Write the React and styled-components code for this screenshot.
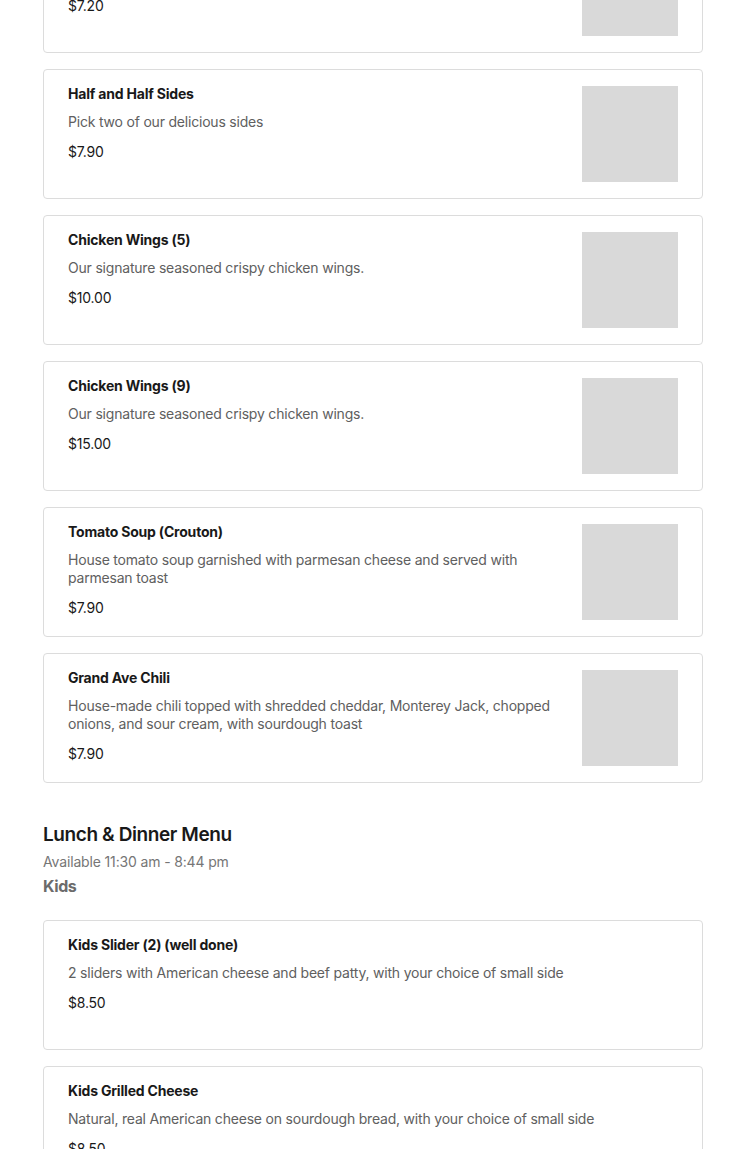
import React from 'react'
import styled, { createGlobalStyle } from 'styled-components'

const GlobalStyle = createGlobalStyle`
    body {
        margin: 0;
        background: #ffffff;
        font-family: "Inter", "Liberation Sans", sans-serif;
        color: #191919;
    }
`;

const Page = styled.div`
    width: 660px;
    margin: -77px auto 0;
    padding-left: 1px;
`;
const List = styled.div`
    display: flex;
    flex-direction: column;
    gap: 16px;
`;
const Card = styled.div`
    box-sizing: border-box;
    min-height: 130px;
    border: 1px solid #dcdcdc;
    border-radius: 4px;
    padding: 16px 24px 16px 24px;
    display: flex;
    justify-content: space-between;
    gap: 24px;
`;
const Info = styled.div`
    display: flex;
    flex-direction: column;
    flex: 1;
`;
const Name = styled.div`
    font-size: 14px;
    line-height: 16px;
    font-weight: 700;
    letter-spacing: -0.2px;
    color: #191919;
`;
const Desc = styled.div`
    font-size: 14px;
    line-height: 18px;
    letter-spacing: -0.2px;
    color: #606060;
    margin-top: 11px;
`;
const Price = styled.div`
    font-size: 14px;
    line-height: 18px;
    letter-spacing: -0.2px;
    color: #191919;
    margin-top: 12px;
`;
const Thumb = styled.div`
    width: 96px;
    height: 96px;
    flex-shrink: 0;
    background: #d9d9d9;
`;
const Section = styled.div`
    margin-top: 40px;
    margin-bottom: 24px;
`;
const Heading = styled.h2`
    margin: 0;
    font-size: 19px;
    line-height: 24px;
    font-weight: 600;
    letter-spacing: -0.4px;
    color: #191919;
`;
const Hours = styled.div`
    margin-top: 6px;
    font-size: 14px;
    line-height: 18px;
    letter-spacing: -0.15px;
    color: #767676;
`;
const Category = styled.div`
    margin-top: 5px;
    font-size: 16px;
    line-height: 20px;
    font-weight: 700;
    letter-spacing: -0.4px;
    color: #6b6b6b;
`;

const sides = [
    { name: 'Side Salad', desc: 'Mixed greens with your choice of dressing', price: '$7.20', img: true },
    { name: 'Half and Half Sides', desc: 'Pick two of our delicious sides', price: '$7.90', img: true },
    { name: 'Chicken Wings (5)', desc: 'Our signature seasoned crispy chicken wings.', price: '$10.00', img: true },
    { name: 'Chicken Wings (9)', desc: 'Our signature seasoned crispy chicken wings.', price: '$15.00', img: true },
    { name: 'Tomato Soup (Crouton)', desc: 'House tomato soup garnished with parmesan cheese and served with parmesan toast', price: '$7.90', img: true },
    { name: 'Grand Ave Chili', desc: 'House-made chili topped with shredded cheddar, Monterey Jack, chopped onions, and sour cream, with sourdough toast', price: '$7.90', img: true },
];

const kids = [
    { name: 'Kids Slider (2) (well done)', desc: '2 sliders with American cheese and beef patty, with your choice of small side', price: '$8.50' },
    { name: 'Kids Grilled Cheese', desc: 'Natural, real American cheese on sourdough bread, with your choice of small side', price: '$8.50' },
];

const MenuItem = ({ item }) => (
    <Card>
        <Info>
            <Name>{item.name}</Name>
            <Desc>{item.desc}</Desc>
            <Price>{item.price}</Price>
        </Info>
        {item.img && <Thumb />}
    </Card>
)

export default function App() {
    return (
        <>
            <GlobalStyle />
            <Page>
                <List>
                    {sides.map((s) => <MenuItem key={s.name} item={s} />)}
                </List>
                <Section>
                    <Heading>Lunch &amp; Dinner Menu</Heading>
                    <Hours>Available 11:30 am - 8:44 pm</Hours>
                    <Category>Kids</Category>
                </Section>
                <List>
                    {kids.map((s) => <MenuItem key={s.name} item={s} />)}
                </List>
            </Page>
        </>
    )
}
